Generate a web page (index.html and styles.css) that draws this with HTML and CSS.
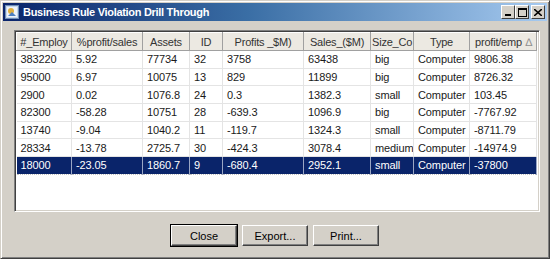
FILE: index.html
```html
<!DOCTYPE html>
<html lang="en">
<head>
    <meta charset="UTF-8">
    <title>Business Rule Violation Drill Through</title>
    <link rel="stylesheet" href="styles.css">
</head>
<body>
    <div class="window">
        <div class="titlebar">
            <svg class="app-icon" width="14" height="14" viewBox="0 0 14 14">
                <rect x="0.5" y="0.5" width="13" height="13" fill="#c8d8ec" stroke="#6f8fb8"/>
                <rect x="2" y="2" width="10" height="10" fill="#eef4fb"/>
                <circle cx="6" cy="6" r="3" fill="#e0b040"/>
                <path d="M3 11 L7 7 L11 11 Z" fill="#4d7fc0"/>
            </svg>
            <span class="title">Business Rule Violation Drill Through</span>
            <div class="controls">
                <div class="ctl"><svg width="8" height="7" viewBox="0 0 8 7"><rect x="1" y="5" width="6" height="2" fill="#000"/></svg></div>
                <div class="ctl"><svg width="9" height="9" viewBox="0 0 9 9"><rect x="0.5" y="0.5" width="8" height="8" fill="none" stroke="#000"/><rect x="0" y="0" width="9" height="2" fill="#000"/></svg></div>
                <div class="ctl close"><svg width="8" height="7" viewBox="0 0 8 7"><path d="M0 0 L8 7 M8 0 L0 7" stroke="#000" stroke-width="1.6"/></svg></div>
            </div>
        </div>

        <div class="grid-frame">
            <table class="grid">
                <colgroup>
                    <col style="width:55px"><col style="width:71px"><col style="width:47px">
                    <col style="width:33px"><col style="width:81px"><col style="width:67px">
                    <col style="width:43px"><col style="width:56px"><col style="width:67px">
                </colgroup>
                <thead>
                    <tr>
                        <th>#_Employ</th><th>%profit/sales</th><th>Assets</th><th>ID</th>
                        <th>Profits _$M)</th><th>Sales_($M)</th><th>Size_Co</th><th>Type</th>
                        <th class="sorted">profit/emp <span class="arrow">&#8710;</span></th>
                    </tr>
                </thead>
                <tbody>
                    <tr><td>383220</td><td>5.92</td><td>77734</td><td>32</td><td>3758</td><td>63438</td><td>big</td><td>Computer</td><td>9806.38</td></tr>
                    <tr><td>95000</td><td>6.97</td><td>10075</td><td>13</td><td>829</td><td>11899</td><td>big</td><td>Computer</td><td>8726.32</td></tr>
                    <tr><td>2900</td><td>0.02</td><td>1076.8</td><td>24</td><td>0.3</td><td>1382.3</td><td>small</td><td>Computer</td><td>103.45</td></tr>
                    <tr><td>82300</td><td>-58.28</td><td>10751</td><td>28</td><td>-639.3</td><td>1096.9</td><td>big</td><td>Computer</td><td>-7767.92</td></tr>
                    <tr><td>13740</td><td>-9.04</td><td>1040.2</td><td>11</td><td>-119.7</td><td>1324.3</td><td>small</td><td>Computer</td><td>-8711.79</td></tr>
                    <tr><td>28334</td><td>-13.78</td><td>2725.7</td><td>30</td><td>-424.3</td><td>3078.4</td><td>medium</td><td>Computer</td><td>-14974.9</td></tr>
                    <tr class="selected"><td>18000</td><td>-23.05</td><td>1860.7</td><td>9</td><td>-680.4</td><td>2952.1</td><td>small</td><td>Computer</td><td>-37800</td></tr>
                </tbody>
            </table>
        </div>

        <div class="buttons">
            <button class="btn default">Close</button>
            <button class="btn">Export...</button>
            <button class="btn">Print...</button>
        </div>
    </div>
</body>
</html>
```

FILE: styles.css
```css
body {
    margin: 0;
    padding: 0;
    background-color: #ffffff;
    font-family: "Liberation Sans", Arial, sans-serif;
    font-size: 11px;
}
.window {
    width: 550px;
    height: 259px;
    box-sizing: border-box;
    background-color: #d4d0c8;
    border-top: 1px solid #d4d0c8;
    border-left: 1px solid #d4d0c8;
    border-right: 1px solid #404040;
    border-bottom: 1px solid #404040;
    box-shadow: inset 1px 1px 0 #ffffff, inset -1px -1px 0 #808080;
    padding: 2px;
    display: flex;
    flex-direction: column;
}
.titlebar {
    height: 18px;
    display: flex;
    align-items: center;
    padding-left: 2px;
    padding-right: 2px;
    background: linear-gradient(to right, #0a246a 0%, #3a6ea5 45%, #a6caf0 100%);
    color: #ffffff;
}
.app-icon {
    margin-right: 4px;
}
.title {
    font-family: "Liberation Sans", Arial, sans-serif;
    font-weight: bold;
    font-size: 11px;
    letter-spacing: -0.3px;
}
.controls {
    margin-left: auto;
    display: flex;
}
.ctl {
    width: 14px;
    height: 14px;
    box-sizing: border-box;
    background-color: #d4d0c8;
    border-top: 1px solid #ffffff;
    border-left: 1px solid #ffffff;
    border-right: 1px solid #404040;
    border-bottom: 1px solid #404040;
    display: flex;
    align-items: center;
    justify-content: center;
}
.ctl.close {
    margin-left: 2px;
}
.grid-frame {
    margin: 9px 0 0 11px;
    width: 526px;
    height: 182px;
    box-sizing: border-box;
    background-color: #ffffff;
    border-top: 1px solid #808080;
    border-left: 1px solid #808080;
    border-right: 1px solid #ffffff;
    border-bottom: 1px solid #ffffff;
    box-shadow: inset 1px 1px 0 #404040, inset -1px -1px 0 #d4d0c8;
    padding: 1px;
    overflow: hidden;
}
.grid {
    border-collapse: collapse;
    table-layout: fixed;
    width: 520px;
    font-family: "Liberation Sans", Arial, sans-serif;
    font-size: 11px;
    color: #1a1a1a;
}
.grid th {
    height: 18px;
    padding: 0 1px;
    box-sizing: border-box;
    font-weight: normal;
    text-align: center;
    white-space: nowrap;
    overflow: hidden;
    letter-spacing: -0.2px;
    background-color: #ece9e2;
    border-top: 1px solid #ffffff;
    border-left: 1px solid #ffffff;
    border-right: 1px solid #a0a0a0;
    border-bottom: 1px solid #a0a0a0;
    color: #333333;
}
.grid th.sorted {
    text-align: left;
    padding-left: 5px;
}
.arrow {
    float: right;
    color: #909090;
    margin-right: 3px;
}
.grid td {
    height: 17.7px;
    padding: 0 2px 0 4px;
    box-sizing: border-box;
    white-space: nowrap;
    overflow: hidden;
    letter-spacing: -0.1px;
    border-right: 1px solid #e4e4e4;
    border-bottom: 1px solid #e4e4e4;
}
.selected td {
    background-color: #0a246a;
    color: #ffffff;
    border-top: 1px dotted #c0c0c0;
    border-bottom: 1px dotted #c0c0c0;
    border-right: 1px solid #9aa6c4;
}
.buttons {
    display: flex;
    justify-content: center;
    gap: 5px;
    margin-top: 13px;
}
.btn {
    width: 66px;
    height: 21px;
    box-sizing: border-box;
    font-family: "Liberation Sans", Arial, sans-serif;
    font-size: 11px;
    color: #000000;
    background-color: #d4d0c8;
    border-top: 1px solid #ffffff;
    border-left: 1px solid #ffffff;
    border-right: 1px solid #404040;
    border-bottom: 1px solid #404040;
    box-shadow: inset -1px -1px 0 #808080;
    padding: 0;
}
.btn.default {
    outline: 1px solid #000000;
}
```
